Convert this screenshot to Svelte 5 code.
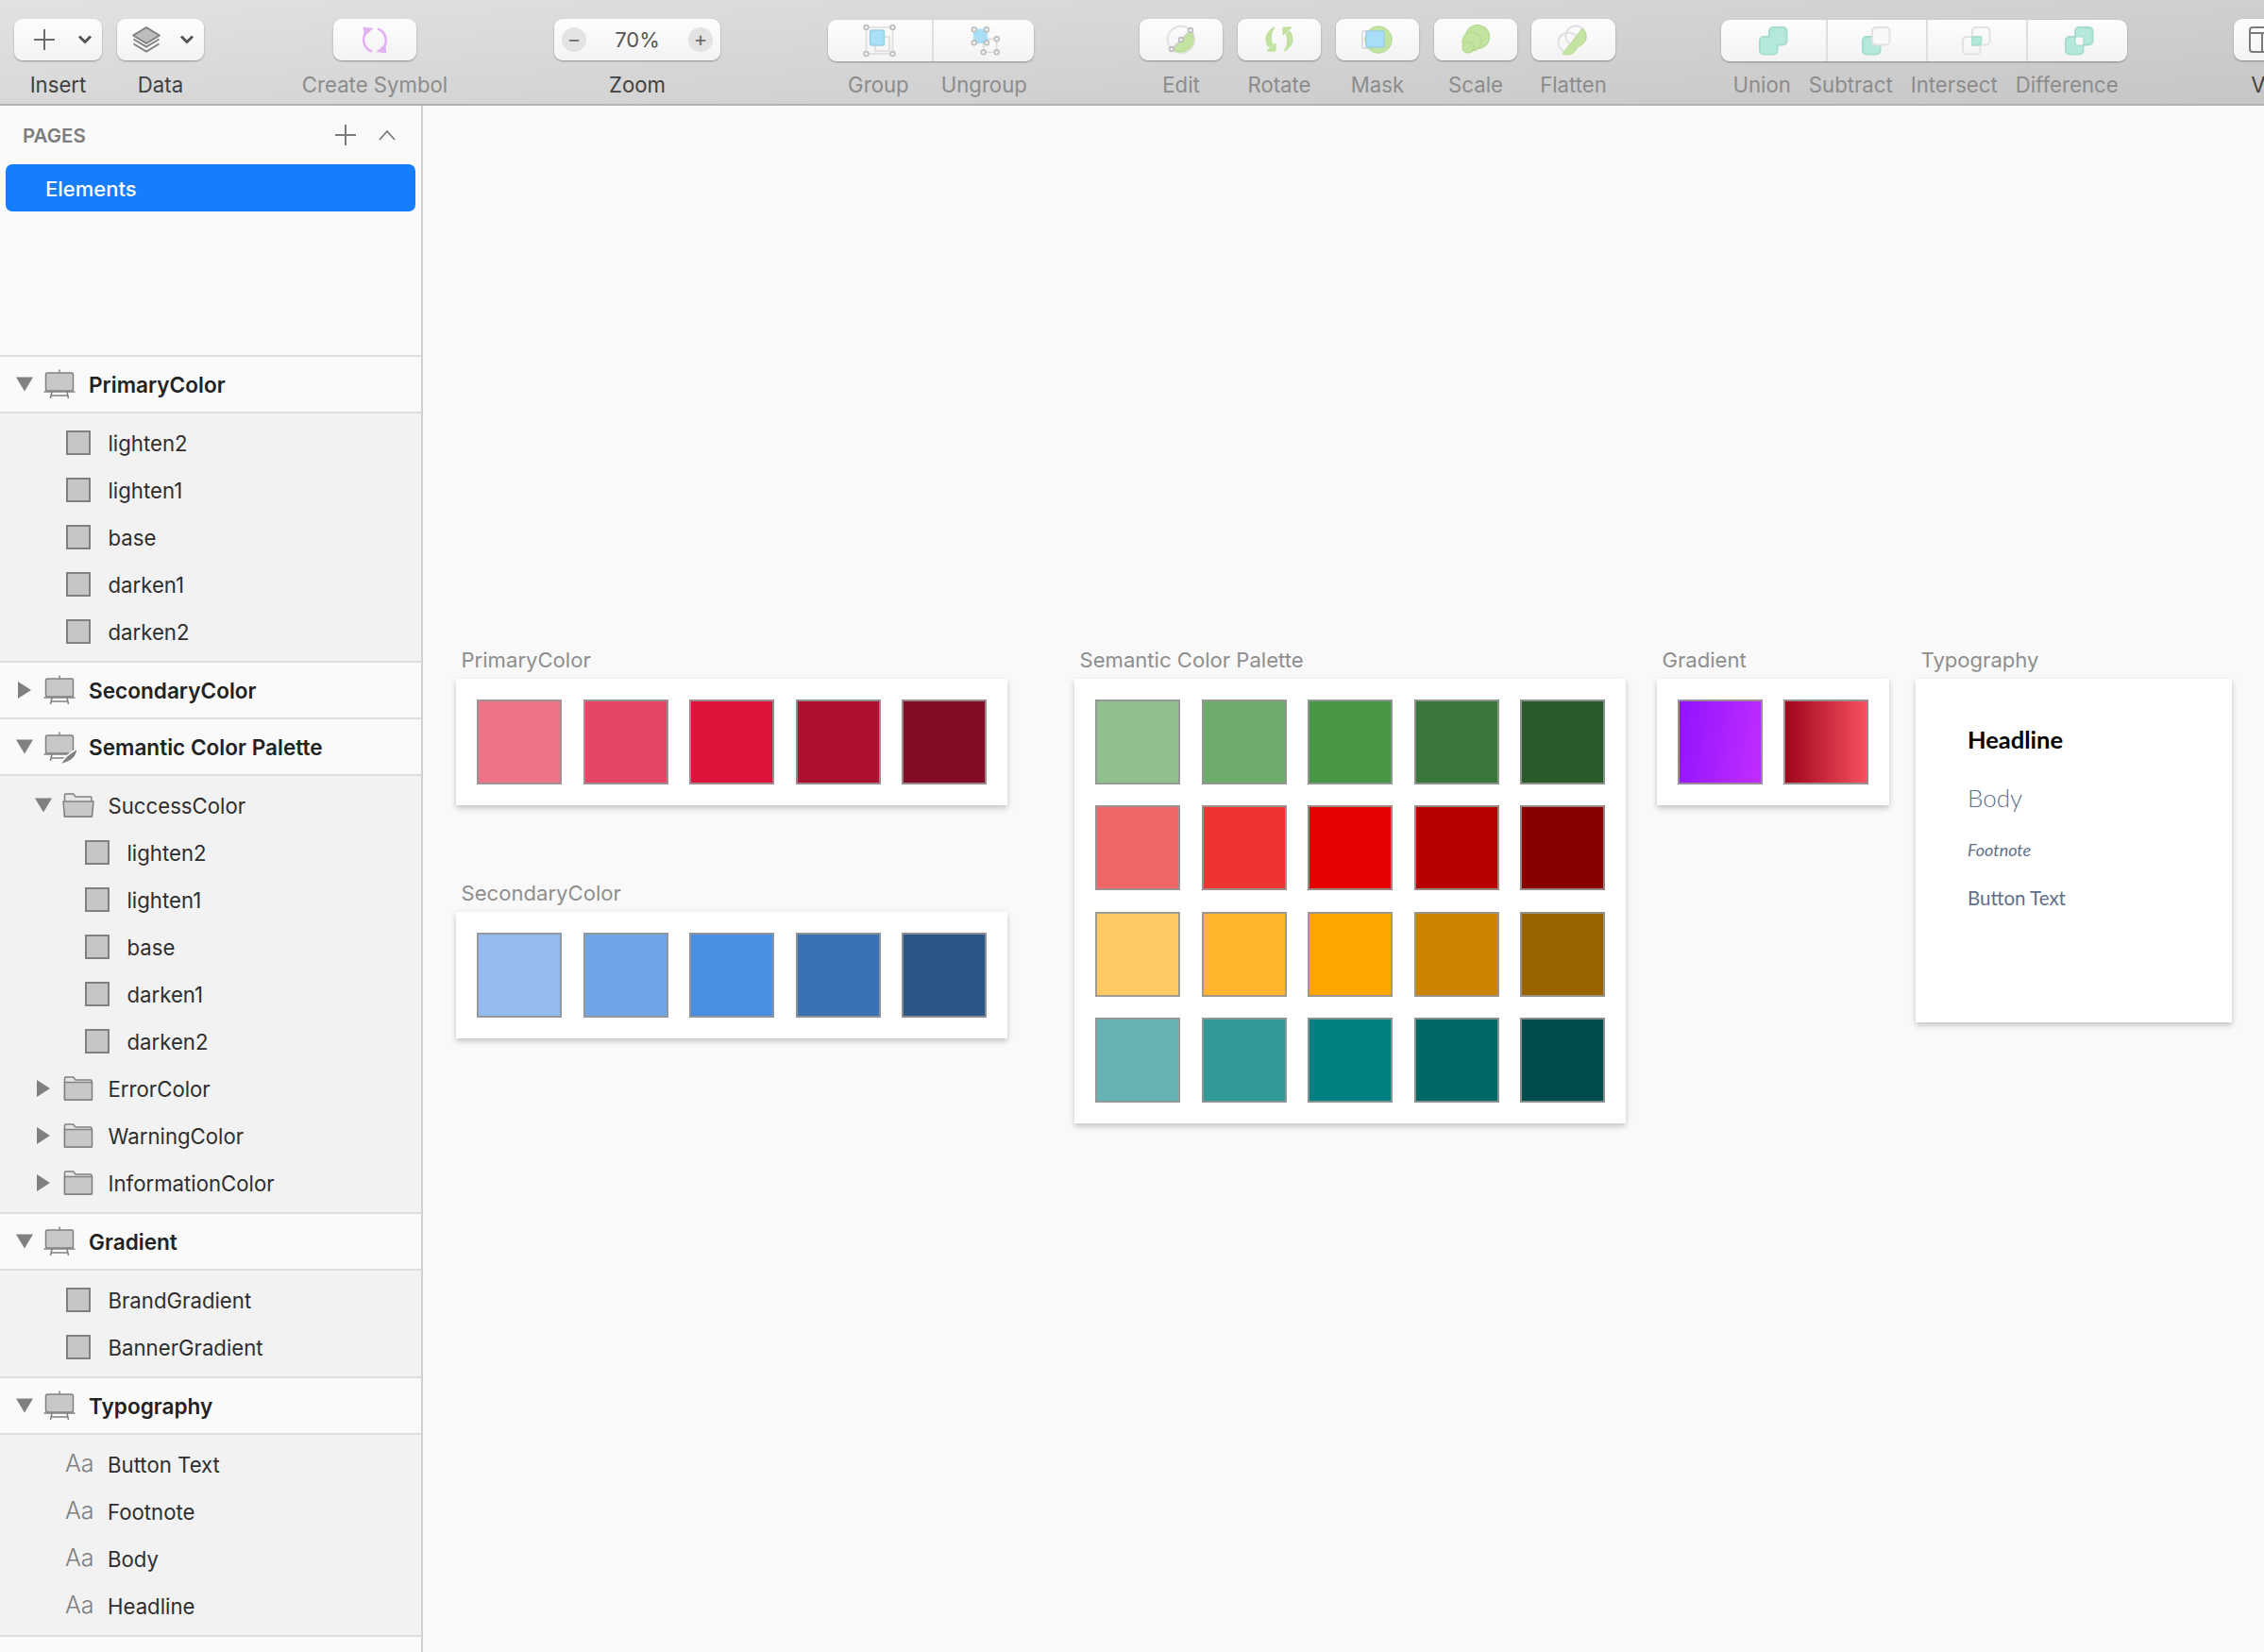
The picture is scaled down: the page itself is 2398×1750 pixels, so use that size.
<script lang="ts">
	type Row = { name: string; kind: 'swatch' | 'text' | 'open' | 'closed'; depth?: number };
	type Section = { name: string; open: boolean; pen?: boolean; rows: Row[] };

	const tones = ['lighten2', 'lighten1', 'base', 'darken1', 'darken2'];
	const swatchRows = (depth = 0): Row[] => tones.map((name) => ({ name, kind: 'swatch', depth }));

	const sections: Section[] = [
		{ name: 'PrimaryColor', open: true, rows: swatchRows() },
		{ name: 'SecondaryColor', open: false, rows: [] },
		{
			name: 'Semantic Color Palette',
			open: true,
			pen: true,
			rows: [
				{ name: 'SuccessColor', kind: 'open' },
				...swatchRows(1),
				{ name: 'ErrorColor', kind: 'closed' },
				{ name: 'WarningColor', kind: 'closed' },
				{ name: 'InformationColor', kind: 'closed' }
			]
		},
		{
			name: 'Gradient',
			open: true,
			rows: [
				{ name: 'BrandGradient', kind: 'swatch' },
				{ name: 'BannerGradient', kind: 'swatch' }
			]
		},
		{
			name: 'Typography',
			open: true,
			rows: ['Button Text', 'Footnote', 'Body', 'Headline'].map((name) => ({ name, kind: 'text' }))
		}
	];

	// canvas offsets of the artboards
	const palettes = [
		{
			name: 'PrimaryColor',
			x: 35,
			y: 573,
			colors: ['#ee7389', '#e54665', '#dc143c', '#ae102f', '#850c25']
		},
		{
			name: 'SecondaryColor',
			x: 35,
			y: 820,
			colors: ['#93bbed', '#6fa5e6', '#4a90e2', '#3b72b4', '#2b5687']
		},
		{
			name: 'Semantic Color Palette',
			x: 690,
			y: 573,
			colors: [
				'#91bf8f', '#6dab6a', '#489646', '#3a773a', '#295a2c',
				'#f06666', '#ee3333', '#e60000', '#b80000', '#8a0000',
				'#ffc966', '#ffb52e', '#ffa500', '#cc8400', '#996300',
				'#66b2b2', '#329999', '#008080', '#006666', '#004c4c'
			]
		}
	];

	const booleans = [
		{ name: 'Union', w: 111 },
		{ name: 'Subtract', w: 106 },
		{ name: 'Intersect', w: 106 },
		{ name: 'Difference', w: 107 }
	];
</script>

{#snippet triangle(open: boolean)}
	<svg class="tri" width="18" height="18" viewBox="0 0 18 18">
		{#if open}
			<path d="M0 1.5h18l-9 15z" fill="#808080" />
		{:else}
			<path d="M2 0l14 9-14 9z" fill="#808080" />
		{/if}
	</svg>
{/snippet}

{#snippet board(pen: boolean)}
	<svg class="board" width="36" height="32" viewBox="0 0 36 32">
		<path d="M17 0.5v3" stroke="#808080" stroke-width="1.5" />
		<rect x="2.5" y="4" width="29" height="19" rx="2" fill="#c8c8c8" stroke="#808080" stroke-width="1.5" />
		<path d="M0.5 24h33M9 24l-1.5 7M25 24l1.5 7M8 28h18" stroke="#808080" stroke-width="1.5" fill="none" />
		{#if pen}
			<path d="M18 35c3-7 9-12 18-17 0 8-6 14-18 17z" fill="#808080" stroke="#fafafa" stroke-width="1.5" />
		{/if}
	</svg>
{/snippet}

{#snippet folder(open: boolean)}
	<svg class="folder" width="34" height="26" viewBox="0 0 34 26">
		<path d="M2.5 25V2q0-1 1-1h8l2.5 3h16q1 0 1 1v20z" fill="#e6e6e6" stroke="#808080" stroke-width="1.5" />
		{#if open}
			<path d="M1 9h32l-1.5 16h-29z" fill="#c8c8c8" stroke="#808080" stroke-width="1.5" stroke-linejoin="round" />
		{:else}
			<path d="M2.5 6.5h29V24q0 1-1 1h-27q-1 0-1-1z" fill="#c8c8c8" stroke="#808080" stroke-width="1.5" />
		{/if}
	</svg>
{/snippet}

{#snippet handle(x: number, y: number)}
	<circle cx={x} cy={y} r="2.4" fill="#f4f4f4" stroke="#bdbdbd" stroke-width="1.6" />
{/snippet}

{#snippet boolRect(x: number, y: number, fill: string, stroke: string)}
	<rect {x} {y} width="18.5" height="18.5" rx="4" {fill} {stroke} stroke-width="2" />
{/snippet}

<div class="app">
	<header class="toolbar">
		<div class="tool" style="width:93px">
			<div class="btn">
				<svg width="93" height="44" viewBox="0 0 93 44">
					<path d="M32 11v22M21 22h22" stroke="#6d6d6d" stroke-width="2" />
					<path d="M69 18.5l6 6 6-6" stroke="#555" stroke-width="3" fill="none" />
				</svg>
			</div>
			<span class="lbl">Insert</span>
		</div>
		<div class="tool" style="width:92px;margin-left:16px">
			<div class="btn">
				<svg width="92" height="44" viewBox="0 0 92 44">
					<path d="M17.5 21.5l13.5 8 13.5-8M17.5 26.5l13.5 8 13.5-8" stroke="#808080" stroke-width="2" fill="none" />
					<path d="M31 9l14 8.5-14 8.5-14-8.5z" fill="#bcbcbc" stroke="#7c7c7c" stroke-width="1.6" stroke-linejoin="round" />
					<path d="M68 18.5l6 6 6-6" stroke="#555" stroke-width="3" fill="none" />
				</svg>
			</div>
			<span class="lbl">Data</span>
		</div>
		<div class="tool off" style="width:88px;margin-left:137px">
			<div class="btn">
				<svg width="88" height="44" viewBox="0 0 88 44">
					<g>
						<path d="M36 13a13 13 0 0 0 5 21.5" stroke="#e3b0f4" stroke-width="2.5" fill="none" />
						<path d="M31.5 8.5l11 1.5-9.500 8.500z" fill="#e3b0f4" />
					</g>
					<g transform="rotate(180 44 22.5)">
						<path d="M36 13a13 13 0 0 0 5 21.5" stroke="#e3b0f4" stroke-width="2.5" fill="none" />
						<path d="M31.5 8.5l11 1.5-9.500 8.500z" fill="#e3b0f4" />
					</g>
				</svg>
			</div>
			<span class="lbl">Create Symbol</span>
		</div>
		<div class="tool" style="width:176px;margin-left:146px">
			<div class="btn zoomer">
				<span class="round">−</span>
				<span class="pct">70%</span>
				<span class="round">+</span>
			</div>
			<span class="lbl">Zoom</span>
		</div>
		<div class="tool off" style="width:218px;margin-left:114px">
			<div class="btn seg">
				<div class="part" style="width:110px">
					<svg width="110" height="44" viewBox="0 0 110 44">
						<rect x="40.5" y="8" width="28" height="28" fill="none" stroke="#dcdcdc" stroke-width="1.6" />
						<rect x="50" y="18" width="15" height="15" fill="none" stroke="#dcdcdc" stroke-width="1.6" />
						<rect x="44.5" y="11" width="15" height="16" rx="2" fill="#a8def8" stroke="#9ccfe8" stroke-width="1.5" />
						{@render handle(40.5, 8)}
						{@render handle(68.5, 8)}
						{@render handle(40.5, 36)}
						{@render handle(68.5, 36)}
					</svg>
				</div>
				<div class="part" style="flex:1">
					<svg width="107" height="44" viewBox="0 0 107 44">
						<rect x="52.7" y="20.3" width="14" height="14" fill="none" stroke="#dcdcdc" stroke-width="1.6" />
						<rect x="42.7" y="10.3" width="13.5" height="14" fill="#a8def8" stroke="#a8def8" stroke-width="1.5" />
						{@render handle(42.7, 10.3)}
						{@render handle(56, 10.3)}
						{@render handle(42.7, 24.3)}
						{@render handle(56, 24.3)}
						{@render handle(66.7, 20.3)}
						{@render handle(52.7, 34.3)}
						{@render handle(66.7, 34.3)}
					</svg>
				</div>
			</div>
			<div class="lbls" style="gap:34px;margin-left:14px">
				<span class="lbl">Group</span>
				<span class="lbl">Ungroup</span>
			</div>
		</div>
		<div class="tool off" style="width:88px;margin-left:112px">
			<div class="btn">
				<svg width="88" height="44" viewBox="0 0 88 44">
					<circle cx="44" cy="22" r="14.3" fill="none" stroke="#e2e2e2" stroke-width="2" />
					<path d="M34 32L54 12A14.2 14.2 0 0 1 34 32z" fill="#c3e3a1" stroke="#b8dc94" />
					<path d="M34 32L54 12" stroke="#cfcfcf" stroke-width="1.5" />
					{@render handle(34, 32)}
					{@render handle(44, 22)}
					{@render handle(54, 12)}
				</svg>
			</div>
			<span class="lbl">Edit</span>
		</div>
		<div class="tool off" style="width:88px;margin-left:16px">
			<div class="btn">
				<svg width="88" height="44" viewBox="0 0 88 44">
					<g fill="#c3e3a1" stroke="#b8dc94">
						<path d="M39 9C31 12 27 22 33 30L37 27C34 22 35 14 39 9z" />
						<path d="M31 34l9 0 0-8z" />
						<g transform="rotate(180 44 21.5)">
							<path d="M39 9C31 12 27 22 33 30L37 27C34 22 35 14 39 9z" />
							<path d="M31 34l9 0 0-8z" />
						</g>
					</g>
				</svg>
			</div>
			<span class="lbl">Rotate</span>
		</div>
		<div class="tool off" style="width:88px;margin-left:16px">
			<div class="btn">
				<svg width="88" height="44" viewBox="0 0 88 44">
					<rect x="28" y="13" width="14" height="18" rx="1.5" fill="none" stroke="#dedede" stroke-width="2" />
					<circle cx="45" cy="22" r="14.3" fill="#c3e3a1" stroke="#b8dc94" />
					<rect x="32" y="13" width="19" height="17" rx="1.5" fill="#a8def8" stroke="#9ccfe8" stroke-width="1.5" />
				</svg>
			</div>
			<span class="lbl">Mask</span>
		</div>
		<div class="tool off" style="width:88px;margin-left:16px">
			<div class="btn">
				<svg width="88" height="44" viewBox="0 0 88 44">
					<g fill="#c3e3a1" stroke="#b3d88e" stroke-width="1.2">
						<circle cx="46" cy="19" r="12.5" />
						<circle cx="40" cy="24" r="10" />
						<circle cx="36" cy="30" r="6" />
					</g>
				</svg>
			</div>
			<span class="lbl">Scale</span>
		</div>
		<div class="tool off" style="width:89px;margin-left:15px">
			<div class="btn">
				<svg width="89" height="44" viewBox="0 0 89 44">
					<circle cx="47" cy="18" r="10.5" fill="none" stroke="#e2e2e2" stroke-width="2" />
					<circle cx="39" cy="25" r="10.5" fill="none" stroke="#e2e2e2" stroke-width="2" />
					<path d="M33 37L54 10C59 15 60 22 54 27C50 30 49 29 47 33C44 38 38 39 33 37z" fill="#c3e3a1" stroke="#b8dc94" />
				</svg>
			</div>
			<span class="lbl">Flatten</span>
		</div>
		<div class="tool off" style="width:430px;margin-left:112px">
			<div class="btn seg">
				{#each booleans as b, i}
					<div class="part" style={`width:${b.w}px`}>
						<svg width={b.w} height="44" viewBox={`0 0 ${b.w} 44`}>
							{#if i === 0}
								{@render boolRect(41, 18, '#b4e8db', '#a5dccf')}
								{@render boolRect(51, 8, '#b4e8db', '#a5dccf')}
								<rect x="42" y="19" width="16.5" height="16.5" fill="#b4e8db" />
							{:else if i === 1}
								{@render boolRect(37, 18, '#b4e8db', '#a5dccf')}
								{@render boolRect(47, 8, '#f8f8f8', '#e2e2e2')}
							{:else if i === 2}
								{@render boolRect(37, 18, 'none', '#e2e2e2')}
								{@render boolRect(47, 8, 'none', '#e2e2e2')}
								<path d="M47 18h9.5v5q0 4-4 4H47z" fill="#b4e8db" stroke="#a5dccf" stroke-width="1.5" />
							{:else}
								{@render boolRect(40, 18, '#b4e8db', '#a5dccf')}
								{@render boolRect(50, 8, '#b4e8db', '#a5dccf')}
								<rect x="50" y="18" width="9" height="9" rx="2" fill="#f8f8f8" stroke="#a5dccf" stroke-width="1.2" />
							{/if}
						</svg>
					</div>
				{/each}
			</div>
			<div class="lbls" style="gap:19px;margin-left:3px">
				{#each booleans as b}
					<span class="lbl">{b.name}</span>
				{/each}
			</div>
		</div>
		<div class="tool" style="width:88px;margin-left:113px">
			<div class="btn">
				<svg width="88" height="44" viewBox="0 0 88 44">
					<rect x="17" y="9" width="60" height="26" rx="3" fill="none" stroke="#7c7c7c" stroke-width="2" />
					<path d="M17 15h60M30 15v20" stroke="#7c7c7c" stroke-width="2" />
				</svg>
			</div>
			<span class="lbl">View</span>
		</div>
	</header>

	<div class="main">
		<aside class="sidebar">
			<div class="pages">
				<div class="pages-head">
					<span class="pages-title">PAGES</span>
					<svg width="22" height="22" viewBox="0 0 22 22">
						<path d="M11 0v22M0 11h22" stroke="#7a7a7a" stroke-width="2" />
					</svg>
					<svg class="collapse" width="18" height="12" viewBox="0 0 18 12">
						<path d="M1 11l8-9 8 9" stroke="#7a7a7a" stroke-width="1.8" fill="none" />
					</svg>
				</div>
				<div class="page-row">Elements</div>
			</div>

			{#each sections as s}
				<section class="layer-group">
					<div class="group-head">
						{@render triangle(s.open)}
						{@render board(!!s.pen)}
						<span>{s.name}</span>
					</div>
					{#if s.rows.length}
						<div class="group-body">
							{#each s.rows as r}
								<div class="layer {r.kind}" class:nested={r.depth === 1}>
									{#if r.kind === 'swatch'}
										<span class="sw"></span>
									{:else if r.kind === 'text'}
										<span class="aa">Aa</span>
									{:else}
										{@render triangle(r.kind === 'open')}
										{@render folder(r.kind === 'open')}
									{/if}
									<span>{r.name}</span>
								</div>
							{/each}
						</div>
					{/if}
				</section>
			{/each}
		</aside>

		<div class="canvas">
			{#each palettes as p}
				<div class="artboard" style={`left:${p.x}px;top:${p.y}px`}>
					<div class="ab-title">{p.name}</div>
					<div class="card grid5">
						{#each p.colors as c}
							<div class="chip" style={`background:${c}`}></div>
						{/each}
					</div>
				</div>
			{/each}

			<div class="artboard" style="left:1307px;top:573px">
				<div class="ab-title">Gradient</div>
				<div class="card grid2">
					<div class="chip brand"></div>
					<div class="chip banner"></div>
				</div>
			</div>

			<div class="artboard" style="left:1581px;top:573px">
				<div class="ab-title">Typography</div>
				<div class="card type">
					<div class="t-head">Headline</div>
					<div class="t-body">Body</div>
					<div class="t-foot">Footnote</div>
					<div class="t-btn">Button Text</div>
				</div>
			</div>
		</div>
	</div>
</div>

<style>
	:global(body) {
		margin: 0;
		background: #f9f9f9;
	}
	.app {
		width: 2398px;
		height: 1750px;
		overflow: hidden;
		font-family: Inter, 'Noto Sans', sans-serif;
		color: #2b2b2b;
	}

	.toolbar {
		height: 112px;
		box-sizing: border-box;
		padding: 20px 0 0 15px;
		display: flex;
		background: linear-gradient(175deg, #e2e2e2, #c6c6c6);
		border-bottom: 2px solid #b2b2b2;
	}
	.tool {
		flex: none;
		display: flex;
		flex-direction: column;
		align-items: center;
	}
	.btn {
		width: 100%;
		height: 44px;
		display: flex;
		background: linear-gradient(#fdfdfd, #f3f3f3);
		border-radius: 9px;
		box-shadow: 0 1px 2px rgba(0, 0, 0, 0.35);
	}
	.btn svg {
		display: block;
		flex: none;
	}
	.lbl {
		margin-top: 14px;
		font-size: 22.2px;
		line-height: 24px;
		white-space: nowrap;
		color: #404040;
	}
	.off .lbl {
		color: #8c8c8c;
	}
	.lbls {
		display: flex;
		justify-content: center;
	}
	.seg {
		margin-top: 1px;
	}
	.seg + .lbls .lbl {
		margin-top: 13px;
	}
	.seg .part + .part {
		border-left: 2px solid #dfdfdf;
		box-sizing: border-box;
	}
	.part {
		overflow: hidden;
	}
	.zoomer {
		box-sizing: border-box;
		padding: 0 8px;
		align-items: center;
		justify-content: space-between;
	}
	.round {
		width: 26px;
		height: 26px;
		border-radius: 50%;
		background: #e3e3e3;
		color: #6e6e6e;
		font-size: 22px;
		line-height: 25px;
		text-align: center;
	}
	.pct {
		font-size: 22px;
		color: #555;
	}

	.main {
		display: flex;
		height: 1638px;
	}

	.sidebar {
		flex: none;
		width: 448px;
		box-sizing: border-box;
		background: #fafafa;
		border-right: 2px solid #d0d0d0;
	}
	.pages {
		height: 264px;
		box-sizing: border-box;
		padding: 0 6px;
	}
	.pages-head {
		height: 62px;
		display: flex;
		align-items: center;
		padding: 0 21px 0 18px;
	}
	.pages-title {
		flex: 1;
		font-size: 20.5px;
		font-weight: 600;
		color: #7d7d7d;
	}
	.collapse {
		margin-left: 24px;
	}
	.page-row {
		height: 50px;
		box-sizing: border-box;
		padding-left: 42px;
		border-radius: 7px;
		background: #167efb;
		color: #fff;
		font-size: 22px;
		font-weight: 500;
		line-height: 52px;
	}

	.layer-group {
		border-top: 2px solid #dedede;
	}
	.layer-group:last-child {
		border-bottom: 2px solid #dedede;
	}
	.group-head {
		height: 58px;
		display: flex;
		align-items: center;
		padding-left: 17px;
		font-size: 22.6px;
		font-weight: 600;
		color: #222;
	}
	.group-head .tri {
		margin-right: 11px;
	}
	.group-head .board {
		margin-right: 12px;
		overflow: visible;
	}
	.group-body {
		background: #f2f2f2;
		border-top: 2px solid #dedede;
		padding: 6px 0;
	}
	.layer {
		height: 50px;
		display: flex;
		align-items: center;
		font-size: 22.2px;
		color: #2e2e2e;
	}
	.layer.swatch,
	.layer.text {
		padding-left: 70px;
	}
	.layer.nested {
		padding-left: 90px;
	}
	.layer.open,
	.layer.closed {
		padding-left: 37px;
	}
	.layer .tri {
		margin-right: 11px;
	}
	.layer .folder {
		margin-right: 14.5px;
	}
	.sw {
		width: 26px;
		height: 26px;
		box-sizing: border-box;
		margin-right: 18.5px;
		background: #c6c6c6;
		border: 2px solid #808080;
	}
	.aa {
		width: 29px;
		margin: -2px 16px 0 -1px;
		font-size: 25px;
		font-weight: 300;
		color: #808080;
	}

	.canvas {
		position: relative;
		flex: 1;
		background: #f9f9f9;
	}
	.artboard {
		position: absolute;
	}
	.ab-title {
		height: 28px;
		margin: 0 0 6px 5.5px;
		font-size: 22.1px;
		line-height: 28px;
		color: #8e8e8e;
		white-space: nowrap;
	}
	.card {
		box-sizing: border-box;
		padding: 22px;
		background: #fff;
		box-shadow: 0 3px 6px rgba(0, 0, 0, 0.22);
	}
	.grid5 {
		display: grid;
		grid-template-columns: repeat(5, 90px);
		column-gap: 22.5px;
		row-gap: 22.3px;
	}
	.grid2 {
		display: grid;
		grid-template-columns: repeat(2, 90px);
		column-gap: 22px;
	}
	.chip {
		height: 90px;
		box-sizing: border-box;
		border: 2px solid rgba(150, 150, 150, 0.9);
	}
	.brand {
		background: linear-gradient(100deg, #9013fe, #c22dff);
	}
	.banner {
		background: linear-gradient(90deg, #9f041b, #f5515f);
	}

	.type {
		width: 335px;
		height: 364px;
		padding: 0 0 0 55px;
		font-family: Lato, 'Open Sans', sans-serif;
		color: #5f7088;
	}
	.t-head {
		padding-top: 47px;
		font-size: 25.5px;
		line-height: 34px;
		font-weight: 700;
		color: #000;
	}
	.t-body {
		margin-top: 28px;
		font-size: 26px;
		line-height: 34px;
		font-weight: 300;
	}
	.t-foot {
		margin-top: 28px;
		font-size: 18px;
		line-height: 20px;
		font-style: italic;
	}
	.t-btn {
		margin-top: 29px;
		font-size: 20.5px;
		line-height: 24px;
	}
</style>
